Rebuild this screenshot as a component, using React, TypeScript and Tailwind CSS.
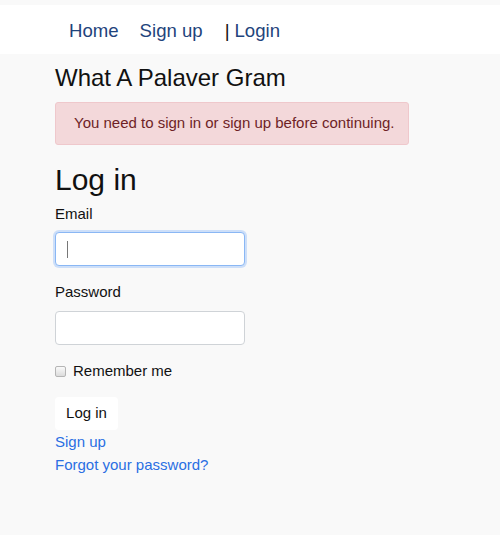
import React from "react";

export default function App() {
  const font = { fontFamily: '"Liberation Sans", Arial, sans-serif' };
  return (
    <div className="min-h-[535px] w-[500px] bg-[#f9f9f9] text-[#111]" style={font}>
      <div className="h-[5px]" />
      <nav className="flex h-[49px] items-center bg-white pl-[69px] pt-[3px] text-[18.6px] text-[#1f447c]">
        <a className="mr-[21px]">Home</a>
        <a>Sign up</a>
        <span className="ml-[22px] mr-[5px] text-[#111]">|</span>
        <a>Login</a>
      </nav>
      <div className="pl-[55px]">
        <h1 className="mt-[11px] text-[24px] leading-[26px] text-[#111]">What A Palaver Gram</h1>
        <div className="mt-[11px] flex h-[43px] w-[354px] items-center rounded-[3px] border border-[#efc8cc] bg-[#f3d8da] pl-[18px] text-[15px] text-[#6e1f26]">
          You need to sign in or sign up before continuing.
        </div>
        <h2 className="mt-[18px] text-[30px] leading-[33px] text-[#111]">Log in</h2>
        <div className="mt-[8px] text-[15px] leading-[20px]">Email</div>
        <div className="mt-[8px] flex h-[34px] w-[190px] items-center rounded-[4px] border border-[#8ab7f4] bg-white pl-[11px] shadow-[0_0_0_2px_#cddff9]">
          <span className="block h-[17px] w-[1px] bg-[#777]" />
        </div>
        <div className="mt-[16px] text-[15px] leading-[20px]">Password</div>
        <div className="mt-[9px] h-[34px] w-[190px] rounded-[4px] border border-[#cfd3d7] bg-white" />
        <div className="mt-[16px] flex h-[20px] items-center text-[15px]">
          <span className="block h-[11px] w-[11px] rounded-[2px] border border-[#b5b5b5] bg-gradient-to-b from-[#fafafa] to-[#dcdcdc]" />
          <span className="ml-[7px] leading-[20px]">Remember me</span>
        </div>
        <button className="mt-[16px] block h-[33px] w-[63px] rounded-[4px] bg-white text-[15px] text-[#111]" style={font}>
          Log in
        </button>
        <div className="text-[15px] leading-[23px] text-[#2a6fe3]">
          <a className="block">Sign up</a>
          <a className="block">Forgot your password?</a>
        </div>
      </div>
    </div>
  );
}
